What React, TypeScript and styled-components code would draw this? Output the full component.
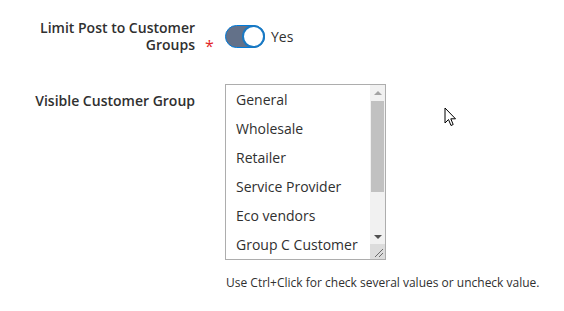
import React from 'react';
import styled, {createGlobalStyle} from 'styled-components';

const groups: string[] = [
    'General',
    'Wholesale',
    'Retailer',
    'Service Provider',
    'Eco vendors',
    'Group C Customer',
]

const GlobalStyle = createGlobalStyle`
  html, body {
    margin: 0;
    padding: 0;
    background: #ffffff;
  }
  body {
    font-family: "Open Sans", "Noto Sans", sans-serif;
    color: #303030;
  }
`

const App = () => {
    return (
        <Page>
            <GlobalStyle/>
            <Field>
                <Label>Limit Post to Customer<br/>Groups</Label>
                <Required>*</Required>
                <Control>
                    <SwitchRow>
                        <Switch $checked/>
                        <SwitchText>Yes</SwitchText>
                    </SwitchRow>
                </Control>
            </Field>
            <Field $spaced>
                <Label $pad>Visible Customer Group</Label>
                <Required/>
                <Control>
                    <ListBox>
                        <Options>
                            {groups.map((name) => <Option key={name}>{name}</Option>)}
                        </Options>
                        <ScrollBar>
                            <ScrollArrow $dir="up"/>
                            <ScrollTrack>
                                <ScrollThumb/>
                            </ScrollTrack>
                            <ScrollArrow $dir="down"/>
                            <Resizer>
                                <svg width="15" height="15" viewBox="0 0 15 15">
                                    <path d="M5 13 L13 5 M9 13 L13 9" stroke="#6b6b6b" strokeWidth="1"/>
                                </svg>
                            </Resizer>
                        </ScrollBar>
                    </ListBox>
                    <Note>Use Ctrl+Click for check several values or uncheck value.</Note>
                </Control>
            </Field>
            <Cursor width="14" height="21" viewBox="0 0 14 21">
                <path d="M1 1 L1 16 L4.5 12.5 L7 18.5 L9.2 17.5 L6.8 11.8 L11.5 11.8 Z"
                      fill="#ffffff" stroke="#000000" strokeWidth="1" strokeLinejoin="miter"/>
            </Cursor>
        </Page>
    );
};

const Page = styled.div`
  position: relative;
  width: 564px;
  height: 311px;
  padding-top: 19px;
  box-sizing: border-box;
  overflow: hidden;
`

const Field = styled.div<{ $spaced?: boolean }>`
  display: flex;
  align-items: flex-start;
  margin-top: ${p => p.$spaced ? '29px' : '0'};
`

const Label = styled.div<{ $pad?: boolean }>`
  width: 195px;
  text-align: right;
  font-size: 14px;
  font-weight: 600;
  line-height: 17px;
  padding-top: ${p => p.$pad ? '8px' : '0'};
  color: #303030;
`

const Required = styled.div`
  width: 30px;
  box-sizing: border-box;
  padding: 19px 0 0 10px;
  color: #e22626;
  font-size: 16px;
  line-height: 17px;
`

const Control = styled.div`
  display: flex;
  flex-direction: column;
`

const SwitchRow = styled.div`
  display: flex;
  align-items: center;
  margin-top: 6px;
  gap: 6px;
`

const Switch = styled.div<{ $checked?: boolean }>`
  position: relative;
  width: 40px;
  height: 23px;
  box-sizing: border-box;
  border-radius: 12px;
  border: 1px solid #007bdb;
  background: ${p => p.$checked ? '#637189' : '#e3e3e3'};

  &::after {
    content: '';
    position: absolute;
    top: -1px;
    ${p => p.$checked ? 'right: -1px;' : 'left: -1px;'}
    width: 23px;
    height: 23px;
    box-sizing: border-box;
    border-radius: 50%;
    border: 2px solid #1979c3;
    background: #ffffff;
  }
`

const SwitchText = styled.span`
  font-size: 14px;
  line-height: 17px;
  color: #303030;
`

const ListBox = styled.div`
  display: flex;
  width: 161px;
  height: 176px;
  box-sizing: border-box;
  border: 1px solid #adadad;
  background: #ffffff;
  overflow: hidden;
`

const Options = styled.div`
  flex: 1;
  overflow: hidden;
`

const Option = styled.div`
  height: 29px;
  line-height: 29px;
  padding: 0 10px;
  font-size: 14px;
  color: #303030;
  white-space: nowrap;
`

const ScrollBar = styled.div`
  width: 15px;
  display: flex;
  flex-direction: column;
  background: #f1f1f1;
`

const ScrollArrow = styled.div<{ $dir: 'up' | 'down' }>`
  height: 15px;
  display: flex;
  align-items: center;
  justify-content: center;

  &::before {
    content: '';
    width: 0;
    height: 0;
    border-left: 4px solid transparent;
    border-right: 4px solid transparent;
    ${p => p.$dir === 'up'
            ? 'border-bottom: 4px solid #a3a3a3;'
            : 'border-top: 4px solid #505050;'}
  }
`

const ScrollTrack = styled.div`
  flex: 1;
  padding: 1px 1px 0 1px;
`

const ScrollThumb = styled.div`
  height: 91px;
  background: #c1c1c1;
`

const Resizer = styled.div`
  height: 15px;
  background: #dcdcdc;
  display: flex;
`

const Note = styled.div`
  margin-top: 14px;
  padding-left: 1px;
  font-size: 12px;
  line-height: 18px;
  color: #303030;
`

const Cursor = styled.svg`
  position: absolute;
  left: 444px;
  top: 107px;
`

export default App;
